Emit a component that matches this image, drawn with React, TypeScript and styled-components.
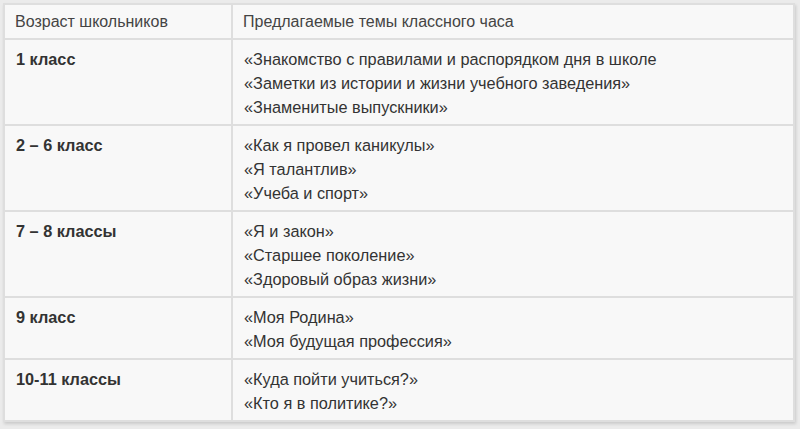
import React from 'react';
import styled, { createGlobalStyle } from 'styled-components';

const GlobalStyle = createGlobalStyle`
  html, body {
    margin: 0;
    padding: 0;
    background: #ebebeb;
  }
  body {
    font-family: "Liberation Sans", Arial, sans-serif;
  }
`;

const Page = styled.div`
  width: 800px;
  height: 429px;
  padding: 3px 5px 0 3px;
  box-sizing: border-box;
`;

const Table = styled.table`
  width: 100%;
  border-collapse: collapse;
  background: #f8f8f8;
  border: 2px solid #dadada;
  box-shadow: 1px 2px 3px rgba(0, 0, 0, 0.14);
  font-size: 16.3px;
  line-height: 24px;
  color: #333;
`;

const HeadCell = styled.th<{ $wide?: boolean }>`
  width: ${(p) => (p.$wide ? 'auto' : '228px')};
  height: 35px;
  padding: 0 10px;
  text-align: left;
  font-weight: normal;
  font-size: 16px;
  color: #444;
  border: 2px solid #dedede;
  box-sizing: border-box;
`;

const Cell = styled.td<{ $label?: boolean }>`
  vertical-align: top;
  padding: 7px 10px 5px 11px;
  border: 2px solid #dedede;
  font-weight: ${(p) => (p.$label ? 'bold' : 'normal')};
  color: #333;
`;

const Line = styled.div`
  white-space: nowrap;
`;

const rows = [
  {
    age: '1 класс',
    topics: [
      '«Знакомство с правилами и распорядком дня в школе',
      '«Заметки из истории и жизни учебного заведения»',
      '«Знаменитые выпускники»',
    ],
  },
  {
    age: '2 – 6 класс',
    topics: ['«Как я провел каникулы»', '«Я талантлив»', '«Учеба и спорт»'],
  },
  {
    age: '7 – 8 классы',
    topics: ['«Я и закон»', '«Старшее поколение»', '«Здоровый образ жизни»'],
  },
  {
    age: '9 класс',
    topics: ['«Моя Родина»', '«Моя будущая профессия»'],
  },
  {
    age: '10-11 классы',
    topics: ['«Куда пойти учиться?»', '«Кто я в политике?»'],
  },
];

export default function App() {
  return (
    <>
      <GlobalStyle />
      <Page>
        <Table>
          <thead>
            <tr>
              <HeadCell>Возраст школьников</HeadCell>
              <HeadCell $wide>Предлагаемые темы классного часа</HeadCell>
            </tr>
          </thead>
          <tbody>
            {rows.map((row) => (
              <tr key={row.age}>
                <Cell $label>{row.age}</Cell>
                <Cell>
                  {row.topics.map((t) => (
                    <Line key={t}>{t}</Line>
                  ))}
                </Cell>
              </tr>
            ))}
          </tbody>
        </Table>
      </Page>
    </>
  );
}
